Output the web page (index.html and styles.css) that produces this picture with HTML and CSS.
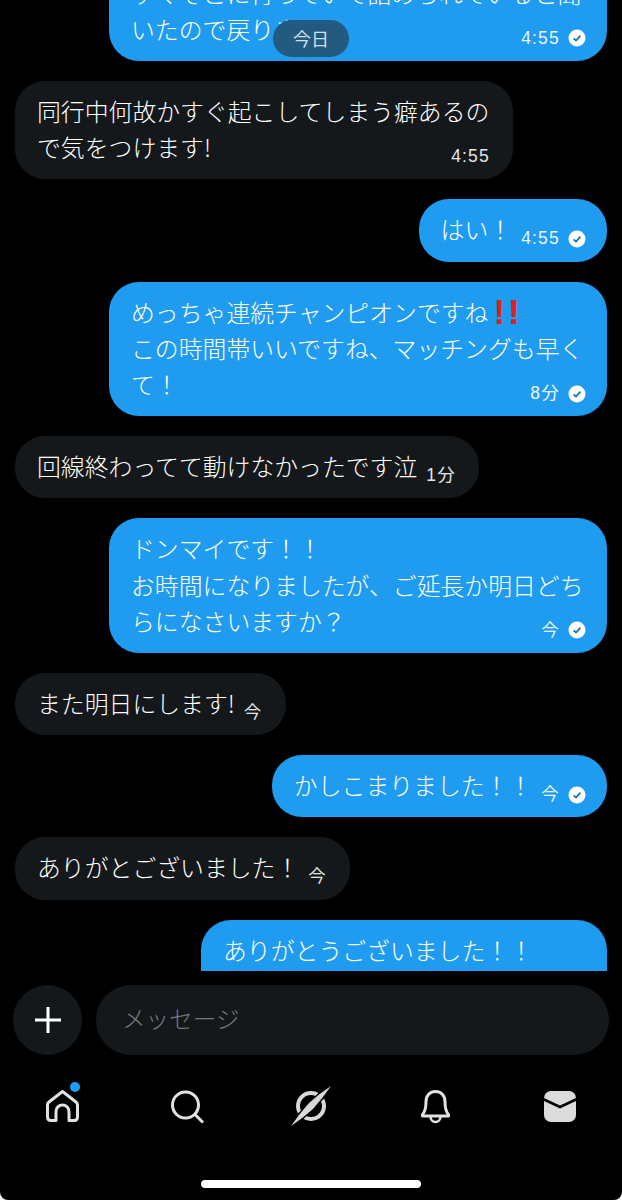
FILE: index.html
```html
<!DOCTYPE html>
<html lang="ja">
<head>
    <meta charset="UTF-8">
    <title>メッセージ</title>
    <link rel="stylesheet" href="styles.css">
</head>
<body>
    <svg class="defs" width="0" height="0">
        <symbol id="check" viewBox="0 0 18 18">
            <circle cx="9" cy="9" r="8.5" fill="#fff"/>
            <path d="M5.6 9.4 L8 11.6 L12.4 6.6" fill="none" stroke="#1b6fa8" stroke-width="1.7"/>
        </symbol>
    </svg>
    <div class="app">
        <div class="chat">
            <div class="pill">今日</div>
            <div class="bubble mine wide first">すぐそこに行っていて詰められていると聞<br>いたので戻りました<span class="meta">4:55<svg class="check"><use href="#check"/></svg></span></div>
            <div class="bubble wide">同行中何故かすぐ起こしてしまう癖あるの<br>で気をつけます!<span class="meta">4:55</span></div>
            <div class="bubble mine">はい！<span class="meta">4:55<svg class="check"><use href="#check"/></svg></span></div>
            <div class="bubble mine wide">めっちゃ連続チャンピオンですね<span class="bang">!!</span><br>この時間帯いいですね、マッチングも早く<br>て！<span class="meta">8分<svg class="check"><use href="#check"/></svg></span></div>
            <div class="bubble">回線終わってて動けなかったです泣<span class="meta">1分</span></div>
            <div class="bubble mine wide">ドンマイです！！<br>お時間になりましたが、ご延長か明日どち<br>らになさいますか？<span class="meta">今<svg class="check"><use href="#check"/></svg></span></div>
            <div class="bubble">また明日にします!<span class="meta">今</span></div>
            <div class="bubble mine">かしこまりました！！<span class="meta">今<svg class="check"><use href="#check"/></svg></span></div>
            <div class="bubble">ありがとございました！<span class="meta">今</span></div>
            <div class="bubble mine last">ありがとうございました！！</div>
        </div>

        <div class="composer">
            <div class="plus">
                <svg width="28" height="28" viewBox="0 0 28 28"><path d="M14 1 V27 M1 14 H27" stroke="#fff" stroke-width="3"/></svg>
            </div>
            <div class="input">メッセージ</div>
        </div>

        <div class="nav">
            <div class="nav-item">
                <svg class="icon" viewBox="0 0 40 40"><path d="M20.5 5.5 L34 16 Q35.5 17.2 35.5 19 V31 Q35.5 34.5 32 34.5 H27 V25.5 A6.5 6.5 0 0 0 14 25.5 V34.5 H9 Q5.5 34.5 5.5 31 V19 Q5.5 17.2 7 16 Z" fill="none" stroke="#e2e2e2" stroke-width="3" stroke-linejoin="round"/></svg>
                <span class="dot"></span>
            </div>
            <div class="nav-item">
                <svg class="icon" viewBox="0 0 40 40"><circle cx="18.5" cy="19" r="13" fill="none" stroke="#e2e2e2" stroke-width="3"/><path d="M28 28.5 L36 36.5" stroke="#e2e2e2" stroke-width="3"/></svg>
            </div>
            <div class="nav-item">
                <svg class="icon" viewBox="0 0 40 40"><circle cx="20" cy="20" r="13" fill="none" stroke="#d8d8d8" stroke-width="4"/><path d="M36 4 L4 36" stroke="#000" stroke-width="8"/><path d="M40 0 Q31 13 22 23 Q12 32 0 40 Q8 28 18 17 Q29 7 40 0 Z" fill="#d8d8d8"/></svg>
            </div>
            <div class="nav-item">
                <svg class="icon" viewBox="0 0 40 40"><path d="M7.5 30 V28.5 C10.5 25.5 11 22 11 15.5 C11 9.5 15 5.5 20.5 5.5 C26 5.5 30 9.5 30 15.5 C30 22 30.5 25.5 33.5 28.5 V30 Z" fill="none" stroke="#e2e2e2" stroke-width="3" stroke-linejoin="round"/><path d="M15.5 30.5 A5 5.5 0 0 0 25.5 30.5" fill="none" stroke="#e2e2e2" stroke-width="2.5"/></svg>
            </div>
            <div class="nav-item">
                <svg class="icon" viewBox="0 0 40 40"><rect x="4" y="5" width="32" height="31" rx="7" fill="#dcdcdc"/><path d="M3 13 L20 21 L37 13" fill="none" stroke="#000" stroke-width="2.5"/></svg>
            </div>
        </div>

        <div class="home-bar"></div>
    </div>
</body>
</html>
```

FILE: styles.css
```css
body {
    margin: 0;
    background: #fff;
    font-family: "Noto Sans CJK JP", "Liberation Sans", sans-serif;
}

.defs {
    position: absolute;
}

.app {
    display: flex;
    flex-direction: column;
    height: 1200px;
    background: #000;
    border-radius: 0 0 8px 8px;
    overflow: hidden;
}

.chat {
    position: relative;
    display: flex;
    flex-direction: column;
    align-items: flex-start;
    gap: 20px;
    height: 971px;
    padding: 0 15px;
    overflow: hidden;
    flex-shrink: 0;
}

.pill {
    position: absolute;
    z-index: 1;
    top: 20px;
    left: 273px;
    width: 76px;
    height: 37px;
    border-radius: 19px;
    background: #235a80;
    color: #d3dfe7;
    font-size: 18px;
    line-height: 37px;
    text-align: center;
}

.bubble {
    display: flow-root;
    flex-shrink: 0;
    padding: 12px 23px 14px 22px;
    border-radius: 30px;
    background: #15181a;
    color: #fff;
    font-size: 23.85px;
    font-weight: 300;
    line-height: 36.2px;
}

.bubble.mine {
    margin-left: auto;
    background: #1f9bf0;
}

.bubble.wide {
    box-sizing: border-box;
    width: 498px;
}

.bubble.first {
    margin-top: -37.4px;
}

.bubble.last {
    min-height: 80px;
    padding-right: 74px;
}

.bang {
    position: relative;
    top: 2px;
    margin-left: 5px;
    color: #e0201b;
    font-family: "Liberation Sans", sans-serif;
    font-size: 35px;
    font-weight: 700;
    line-height: 1px;
    letter-spacing: 3px;
}

.meta {
    float: right;
    display: flex;
    align-items: center;
    gap: 8px;
    height: 17px;
    margin: 19px 0 0 9px;
    font-family: "Liberation Sans", "Noto Sans CJK JP", sans-serif;
    font-size: 17.5px;
    font-weight: 400;
    line-height: 17px;
    letter-spacing: 1.2px;
    color: #e3e5e7;
}

.mine .meta {
    margin-right: -2px;
    color: #eaf5fd;
}

.check {
    width: 18px;
    height: 18px;
    flex-shrink: 0;
}

.composer {
    display: flex;
    gap: 14px;
    margin-top: 14px;
    padding: 0 13px;
}

.plus {
    display: flex;
    align-items: center;
    justify-content: center;
    flex-shrink: 0;
    width: 69px;
    height: 70px;
    border-radius: 50%;
    background: #15181a;
}

.input {
    flex: 1;
    height: 70px;
    padding-left: 26px;
    border-radius: 35px;
    background: #15181a;
    color: #777b7f;
    font-size: 23.6px;
    font-weight: 300;
    line-height: 66px;
}

.nav {
    display: grid;
    grid-template-columns: repeat(5, 1fr);
    margin-top: 31px;
}

.nav-item {
    position: relative;
    display: flex;
    justify-content: center;
}

.icon {
    width: 40px;
    height: 40px;
}

.dot {
    position: absolute;
    top: -4px;
    left: 70px;
    width: 10px;
    height: 10px;
    border-radius: 50%;
    background: #1f9bf0;
}

.home-bar {
    width: 220px;
    height: 8px;
    margin: 54px auto 0;
    border-radius: 4px;
    background: #fff;
}
```
